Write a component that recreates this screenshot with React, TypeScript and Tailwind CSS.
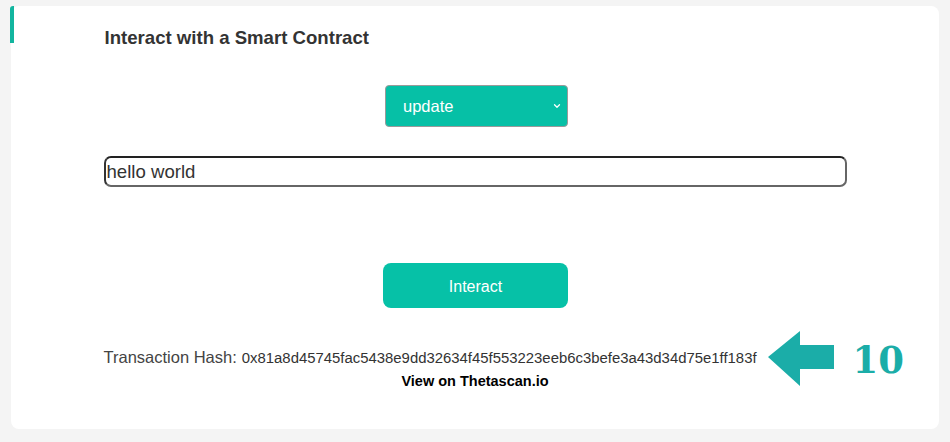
import { ChevronDown } from 'lucide-react'

function Arrow() {
  return (
    <svg width="66" height="56" viewBox="0 0 66 56" className="block">
      <polygon points="0,26 32,0 32,14 66,14 66,38 32,38 32,55" fill="#1bada8" />
    </svg>
  )
}

export default function App() {
  return (
    <div className="min-h-[442px] w-[950px] bg-[#f4f4f4] pt-[6px] pl-[11px] font-['Liberation_Sans',Arial,sans-serif]">
      <div className="relative h-[423px] w-[928px] rounded-[8px] bg-white">
        <div className="absolute -left-[1px] top-0 h-[37px] w-[4px] rounded-tl-[3px] bg-[#12b59f]" />

        <div className="mx-auto w-[743px] pt-[21px]">
          <h3 className="pl-[1px] text-[18.6px] font-bold leading-[22px] text-[#333]">
            Interact with a Smart Contract
          </h3>

          <div className="mt-[36px] flex justify-center">
            <div className="relative ml-[3px] h-[42px] w-[183px] rounded-[4px] border border-[#9a9a9a] bg-[#06c0a6]">
              <select className="h-full w-full appearance-none bg-transparent pl-[17px] text-[16.5px] text-white outline-none">
                <option>update</option>
              </select>
              <ChevronDown
                className="pointer-events-none absolute right-[5px] top-[15px] h-[10px] w-[10px] text-white"
                strokeWidth={3}
              />
            </div>
          </div>

          <input
            defaultValue="hello world"
            className="mt-[29px] block h-[31px] w-[743px] rounded-[7px] border-2 border-[#666] border-t-[#222] border-l-[#333] px-[1px] text-[18.6px] text-[#333] outline-none"
          />

          <div className="mt-[76px] flex justify-center">
            <button className="ml-[1px] h-[45px] w-[185px] rounded-[8px] bg-[#06c1a7] pt-[3px] text-[16px] text-white">
              Interact
            </button>
          </div>

          <div className="relative mt-[40px] flex items-baseline leading-[18px]">
            <span className="text-[16.5px] text-[#444]">Transaction Hash:</span>
            <span className="ml-[5px] text-[14.9px] text-[#333]">
              0x81a8d45745fac5438e9dd32634f45f553223eeb6c3befe3a43d34d75e1ff183f
            </span>
            <div className="absolute left-[664px] top-[-17px] flex items-center">
              <Arrow />
              <span className="ml-[19px] mt-[2px] font-['DejaVu_Serif',serif] text-[37px] font-bold leading-none text-[#1bada8]">
                10
              </span>
            </div>
          </div>

          <div className="mt-[2px] text-center">
            <a className="text-[14.5px] font-bold leading-[16px] text-black">View on Thetascan.io</a>
          </div>
        </div>
      </div>
    </div>
  )
}
